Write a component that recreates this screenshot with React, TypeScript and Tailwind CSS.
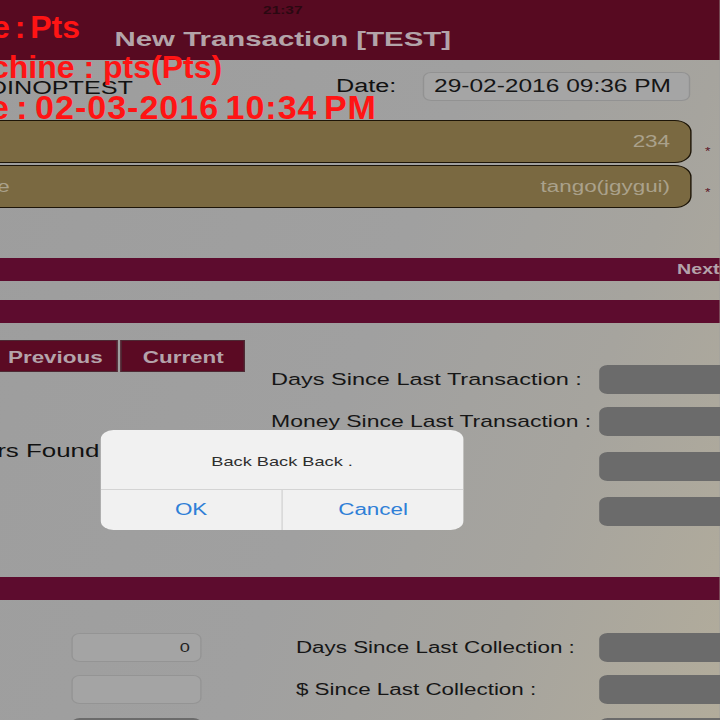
import React from 'react';

// The screen is shown stretched sideways, so the page is laid out at 514px and widened by 1.4.

const Bar: React.FC<{ children?: React.ReactNode }> = ({ children }) => (
    <div className="h-[23px] bg-[#5d0c2e] flex items-center justify-end">{children}</div>
);

const GrayBox: React.FC = () => <div className="h-[29px] w-[110px] shrink-0 rounded-[6px] bg-[#6b6b6b]" />;

const Tab: React.FC<{ label: string }> = ({ label }) => (
    <div className="w-[89px] h-[32px] shrink-0 flex items-center justify-center pt-[3px] border border-[#4d2a34] bg-[#5b0a23] text-[16px] font-bold text-[#b4a3aa]">
        {label}
    </div>
);

const InfoRow: React.FC<{ label: string; width: string; size: string }> = ({ label, width, size }) => (
    <div className="flex items-center h-[29px]">
        <span className={`${width} ${size} shrink-0 whitespace-nowrap text-[#161616]`}>{label}</span>
        <GrayBox />
    </div>
);

const App: React.FC = () => {
    return (
        <div className="relative w-[720px] h-[720px] overflow-hidden bg-[#9e9e9e] font-['Liberation_Sans',Arial,sans-serif]">
            <div className="relative w-[514px] h-[720px] origin-top-left scale-x-[1.4] bg-[linear-gradient(105deg,#9d9d9d_0%,#a0a0a0_50%,#a6a49e_75%,#b2ac9b_100%)]">
                {/* header */}
                <div className="h-[60px] bg-[#570a21]">
                    <div className="w-[404px] flex flex-col items-center">
                        <span className="mt-[3px] text-[11px] leading-[14px] font-bold text-[#2a0811]">21:37</span>
                        <span className="mt-[10px] text-[21px] leading-[24px] font-bold text-[#b3a4a9] whitespace-nowrap">New Transaction [TEST]</span>
                    </div>
                </div>

                {/* user + date */}
                <div className="pt-[12px] flex items-center h-[41px]">
                    <span className="ml-[-8px] w-[248px] shrink-0 pt-[3px] text-[18px] text-[#111]">DINOPTEST</span>
                    <span className="w-[62px] shrink-0 text-[18px] text-[#111]">Date:</span>
                    <div className="w-[191px] h-[29px] shrink-0 rounded-[6px] border border-[#929292] bg-[#a5a5a5] flex items-center pl-[7px] text-[17.5px] text-[#151515] whitespace-nowrap">
                        29-02-2016 09:36 PM
                    </div>
                </div>

                {/* machine fields */}
                <div className="mt-[19px] flex flex-col gap-[2px]">
                    <div className="flex">
                        <div className="ml-[-20px] w-[513.6px] h-[43px] shrink-0 rounded-r-[12px] border-[1.5px] border-[#1d1508] bg-[#7a6941] flex items-center justify-end pr-[14px] text-[16px] text-[#aaa18b]">
                            234
                        </div>
                        <span className="ml-[10px] mt-[27px] text-[10px] leading-[10px] text-[#5a1426]">*</span>
                    </div>
                    <div className="flex">
                        <div className="ml-[-20px] w-[513.6px] h-[43px] shrink-0 rounded-r-[12px] border-[1.5px] border-[#1d1508] bg-[#7a6941] flex items-center justify-between pl-[17px] pr-[14px] text-[16px] text-[#aaa18b]">
                            <span>e</span>
                            <span>tango(jgygui)</span>
                        </div>
                        <span className="ml-[10px] mt-[23px] text-[10px] leading-[10px] text-[#5a1426]">*</span>
                    </div>
                </div>

                <div className="mt-[50px]">
                    <Bar>
                        <span className="text-[14px] font-bold text-[#b4a2aa]">Next</span>
                    </Bar>
                </div>
                <div className="mt-[19px]">
                    <Bar />
                </div>

                {/* last transaction */}
                <div className="mt-[17px] h-[237px] flex">
                    <div className="w-[193.6px] shrink-0">
                        <div className="ml-[-5px] flex gap-[2.4px]">
                            <Tab label="Previous" />
                            <Tab label="Current" />
                        </div>
                        <div className="mt-[68px] ml-[-2px] text-[18.5px] leading-[21px] text-[#111] whitespace-nowrap">rs Found</div>
                    </div>
                    <div className="pt-[25px] flex flex-col">
                        <InfoRow label="Days Since Last Transaction :" width="w-[234.3px]" size="text-[16.8px]" />
                        <div className="mt-[13px]">
                            <InfoRow label="Money Since Last Transaction :" width="w-[234.3px]" size="text-[16.4px]" />
                        </div>
                        <div className="mt-[16px] pl-[234.3px]">
                            <GrayBox />
                        </div>
                        <div className="mt-[16px] pl-[234.3px]">
                            <GrayBox />
                        </div>
                    </div>
                </div>

                <Bar />

                {/* collection */}
                <div className="mt-[33px] flex flex-col">
                    <div className="flex items-center">
                        <div className="ml-[50.7px] w-[93px] h-[29px] shrink-0 rounded-[6px] border border-[#949494] bg-[#a4a4a4] flex items-center justify-end pr-[7px] pt-[1px] text-[13px] text-[#222]">
                            0
                        </div>
                        <div className="ml-[67.7px]">
                            <InfoRow label="Days Since Last Collection :" width="w-[216.5px]" size="text-[16px]" />
                        </div>
                    </div>
                    <div className="mt-[13px] flex items-center">
                        <div className="ml-[50.7px] w-[93px] h-[29px] shrink-0 rounded-[6px] border border-[#949494] bg-[#a4a4a4]" />
                        <div className="ml-[67.7px]">
                            <InfoRow label="$ Since Last Collection :" width="w-[216.5px]" size="text-[16px]" />
                        </div>
                    </div>
                    <div className="mt-[14px] flex items-center">
                        <div className="ml-[50.7px] w-[93px] h-[29px] shrink-0 rounded-[6px] bg-[#6b6b6b]" />
                        <div className="ml-[284.2px]">
                            <GrayBox />
                        </div>
                    </div>
                </div>

                {/* alert */}
                <div className="absolute left-[72px] top-[430px] w-[259px] h-[100px] rounded-[9px] bg-[#f1f1f1] flex flex-col overflow-hidden">
                    <div className="h-[59px] flex items-center justify-center pt-[5px] text-[13px] text-[#2e2e2e]">Back Back Back .</div>
                    <div className="flex-1 flex border-t border-[#d4d4d4]">
                        <div className="flex-1 flex items-center justify-center text-[16px] text-[#2f7fd7]">OK</div>
                        <div className="flex-1 flex items-center justify-center border-l border-[#d4d4d4] text-[16px] text-[#2f7fd7]">Cancel</div>
                    </div>
                </div>
            </div>

            {/* debug overlay */}
            <div className="absolute left-0 top-[7px] flex flex-col leading-[40px] font-bold text-[#ff1414] whitespace-nowrap">
                <span className="ml-[-8px] text-[32px] [word-spacing:-4px]">e : Pts</span>
                <span className="ml-[-9px] text-[32px]">chine : pts(Pts)</span>
                <span className="ml-[-10px] text-[34px] tracking-[1px] [word-spacing:-4px]">e : 02-03-2016 10:34 PM</span>
            </div>
        </div>
    );
};

export default App;
